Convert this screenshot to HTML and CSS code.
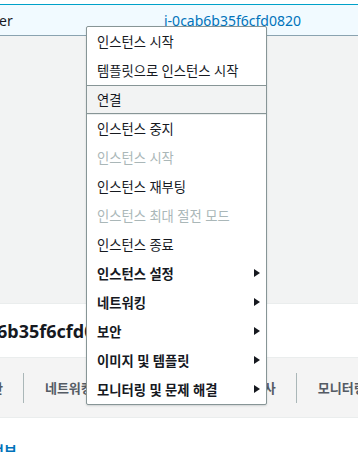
FILE: index.html
```html
<!DOCTYPE html>
<html lang="ko">
<head>
    <meta charset="UTF-8" />
    <meta name="viewport" content="width=device-width, initial-scale=1.0" />
    <title>인스턴스 작업</title>
    <link rel="stylesheet" href="styles.css">
</head>
<body>
    <div class="page">
        <div class="top-gap"></div>
        <div class="row selected">
            <span class="cell-name">er</span>
            <a class="cell-id" href="#">i-0cab6b35f6cfd0820</a>
        </div>
        <div class="panel"></div>
        <div class="summary">
            <h2 class="summary-title">6b35f6cfd0820</h2>
        </div>
        <div class="tabs">
            <span class="tab">보안</span>
            <span class="tab">네트워킹</span>
            <span class="tab">스토리지</span>
            <span class="tab">상태 검사</span>
            <span class="tab">모니터링</span>
        </div>
        <div class="details">
            <a class="details-link" href="#">정보</a>
        </div>

        <ul class="menu">
            <li class="item">인스턴스 시작</li>
            <li class="item">템플릿으로 인스턴스 시작</li>
            <li class="item active">연결</li>
            <li class="item">인스턴스 중지</li>
            <li class="item disabled">인스턴스 시작</li>
            <li class="item">인스턴스 재부팅</li>
            <li class="item disabled">인스턴스 최대 절전 모드</li>
            <li class="item">인스턴스 종료</li>
            <li class="item sub">인스턴스 설정<span class="arrow"></span></li>
            <li class="item sub">네트워킹<span class="arrow"></span></li>
            <li class="item sub">보안<span class="arrow"></span></li>
            <li class="item sub">이미지 및 템플릿<span class="arrow"></span></li>
            <li class="item sub">모니터링 및 문제 해결<span class="arrow"></span></li>
        </ul>
    </div>
</body>
</html>
```

FILE: styles.css
```css
* {
    margin: 0;
    padding: 0;
    box-sizing: border-box;
}

body {
    font-family: "Noto Sans", "Noto Sans CJK KR", sans-serif;
    color: #16191f;
    background-color: #ffffff;
}

.page {
    position: relative;
    width: 358px;
    height: 452px;
    overflow: hidden;
}

.top-gap {
    height: 4px;
}

.row {
    display: flex;
    align-items: center;
    height: 32px;
    font-size: 14px;
}

.row.selected {
    background-color: #f1faff;
    border-top: 1px solid #00a1c9;
    border-bottom: 1px solid #8aa3b0;
}

.cell-name {
    width: 165px;
    margin-left: -1px;
}

.cell-id {
    color: #0073bb;
    text-decoration: none;
}

.panel {
    height: 268px;
    background-color: #f2f3f3;
    border-bottom: 1px solid #eaeded;
}

.summary {
    display: flex;
    align-items: center;
    height: 54px;
    border-bottom: 1px solid #eaeded;
}

.summary-title {
    font-size: 18px;
    font-weight: 700;
    margin-left: -3px;
}

.tabs {
    display: flex;
    align-items: center;
    height: 60px;
    background-color: #f4f4f4;
    border-bottom: 1px solid #eaeded;
    margin-left: -42px;
}

.tab {
    flex-shrink: 0;
    padding: 0 20px 0 21px;
    line-height: 30px;
    font-size: 13px;
    font-weight: 700;
    color: #545b64;
    white-space: nowrap;
    border-right: 1px solid #aab7b8;
}

.details {
    padding-top: 21px;
}

.details-link {
    margin-left: -9px;
    font-size: 14px;
    font-weight: 700;
    color: #0073bb;
    text-decoration: none;
}

.menu {
    position: absolute;
    left: 86px;
    top: 26px;
    width: 181px;
    list-style: none;
    background-color: #ffffff;
    border: 1px solid #879596;
    border-radius: 2px;
    box-shadow: 0 1px 2px rgba(0, 28, 36, 0.15);
}

.item {
    display: flex;
    align-items: center;
    justify-content: space-between;
    height: 29px;
    padding: 0 6px 1px 10px;
    font-size: 13.3px;
    white-space: nowrap;
}

.item.active {
    background-color: #f2f3f3;
    border: 1px solid #879596;
    margin: 0 -1px;
    padding-left: 10px;
}

.item.active + .item {
    border-top: 1px solid #eaeded;
}

.item.disabled {
    color: #aab7b8;
}

.item.sub {
    font-weight: 700;
}

.arrow {
    width: 0;
    height: 0;
    border-top: 4px solid transparent;
    border-bottom: 4px solid transparent;
    border-left: 6px solid #16191f;
}
```
